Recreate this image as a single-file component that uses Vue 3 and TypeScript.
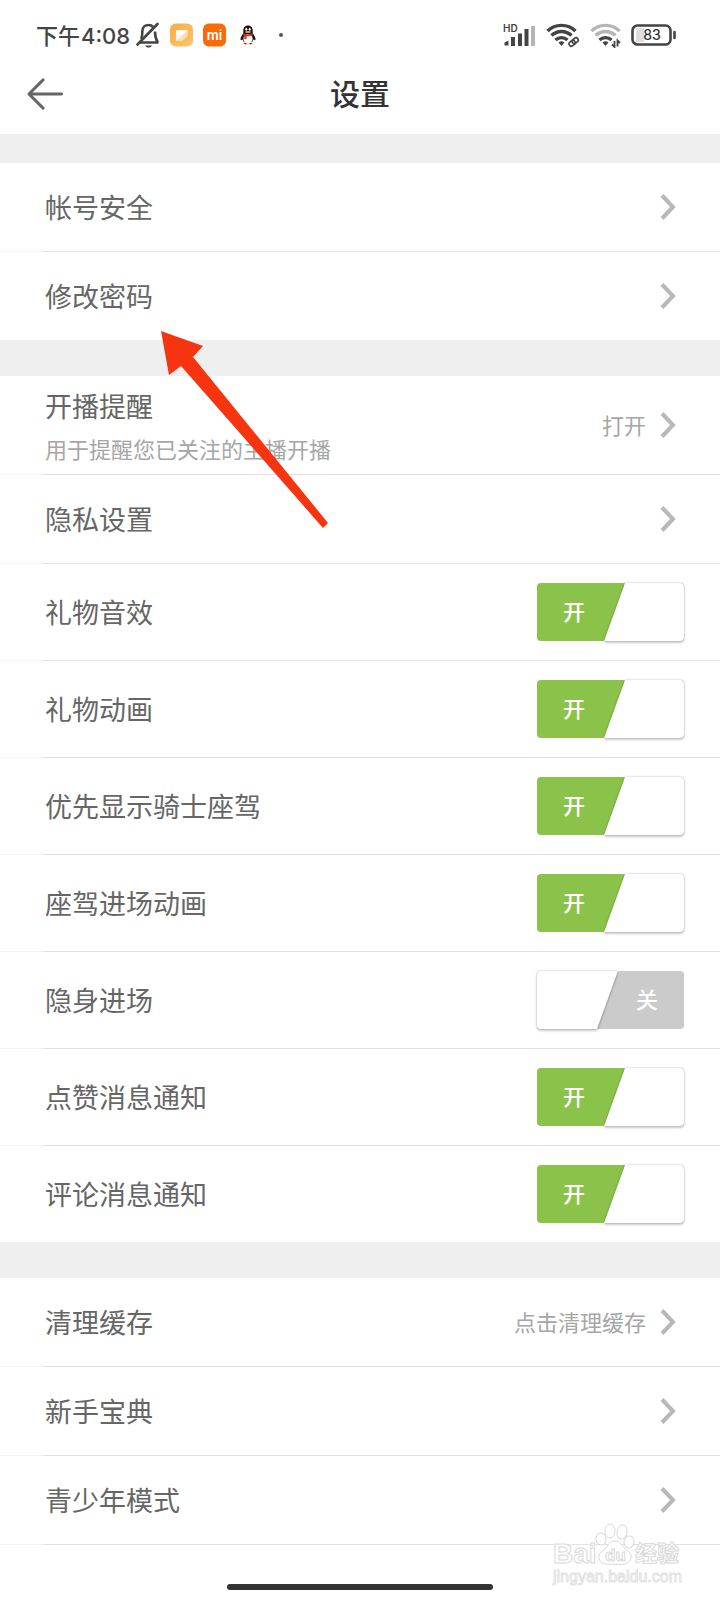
<script setup lang="ts">
import { ref } from 'vue'

interface LinkRow {
  label: string
  note?: string
  value?: string
}

interface ToggleRow {
  id: string
  label: string
  on: boolean
}

const accountRows: LinkRow[] = [{ label: '帐号安全' }, { label: '修改密码' }]

const liveRows: LinkRow[] = [
  { label: '开播提醒', note: '用于提醒您已关注的主播开播', value: '打开' },
  { label: '隐私设置' },
]

const toggles = ref<ToggleRow[]>([
  { id: 'gift-sound', label: '礼物音效', on: true },
  { id: 'gift-animation', label: '礼物动画', on: true },
  { id: 'knight-ride', label: '优先显示骑士座驾', on: true },
  { id: 'ride-entrance', label: '座驾进场动画', on: true },
  { id: 'stealth', label: '隐身进场', on: false },
  { id: 'likes', label: '点赞消息通知', on: true },
  { id: 'comments', label: '评论消息通知', on: true },
])

const otherRows: LinkRow[] = [
  { label: '清理缓存', value: '点击清理缓存' },
  { label: '新手宝典' },
  { label: '青少年模式' },
]
</script>

<template>
  <div class="page">
    <div class="status">
      <div class="status-left">
        <span class="clock">下午<span class="digits">4:08</span></span>
        <svg class="bell" width="24" height="26" viewBox="0 0 24 26" fill="none" stroke="#444" stroke-width="2.6">
          <path d="M3.5 20.5h19M5 17c1.300-2 1.300-4 1.300-7.500C6.300 5.500 9 3 12.500 3c2 0 3.500.7 4.700 2M19 9.500c0 5 .3 7 2.800 11" />
          <path d="M1.500 22.500 21.500 2" stroke-linecap="round" />
          <path d="M9 23.500h7c-1 1.500-2 2-3.500 2s-2.500-.5-3.500-2z" fill="#444" stroke="none" />
        </svg>
        <svg width="23" height="24" viewBox="0 0 24 24">
          <defs>
            <linearGradient id="note-bg" x1="0" y1="0" x2="1" y2="1">
              <stop offset="0" stop-color="#f8ad45" />
              <stop offset="1" stop-color="#fbc66c" />
            </linearGradient>
          </defs>
          <rect width="24" height="24" rx="6" fill="url(#note-bg)" />
          <path d="M6.500 7h12v6l-5.500 5H6.500z" fill="#fde0ab" />
          <path d="M6.500 7h12L6.500 18z" fill="#fff" />
        </svg>
        <svg width="23" height="24" viewBox="0 0 24 24">
          <rect width="24" height="24" rx="6" fill="#fb6a09" />
          <text x="12" y="17" text-anchor="middle" font-family="Inter, sans-serif" font-size="14" font-weight="600" fill="#fff">mi</text>
        </svg>
        <svg class="penguin" width="16" height="20" viewBox="0 0 16 20">
          <path d="M8 .5c3.200 0 4.700 2.300 4.700 5.500v2l2.300 4c.8 1.600.6 3-.2 3.200l-1.600-.7-.7 2.200H3.500l-.7-2.200-1.600.7C.4 15 .2 13.600 1 12l2.300-4V6C3.300 2.800 4.800.5 8 .5z" fill="#161616" />
          <ellipse cx="8" cy="13.700" rx="4.600" ry="4.500" fill="#fff" />
          <ellipse cx="6.300" cy="4.300" rx="1" ry="1.500" fill="#fff" />
          <ellipse cx="9.700" cy="4.300" rx="1" ry="1.500" fill="#fff" />
          <ellipse cx="8" cy="7" rx="3" ry="1" fill="#f5a21d" />
          <path d="M3.200 8.300c3 1.600 6.600 1.600 9.600 0v2c-2.300 1-4.300 1.200-6.300 1v3l-2.300-.4.2-3.300-1.200-.5z" fill="#e32a2a" />
          <path d="M3 18.300c1.500-1 3-.8 4.500.2-1.300 1.200-3.500 1.200-4.500-.2zM8.500 18.500c1.500-1 3-1.200 4.500-.2-1 1.400-3.200 1.400-4.500.2z" fill="#a85a18" />
        </svg>
        <span class="more-dot"></span>
      </div>
      <div class="status-right">
        <svg width="34" height="24" viewBox="0 0 34 24">
          <text x="1" y="9" font-family="Inter, sans-serif" font-size="10" font-weight="600" fill="#444">HD</text>
          <g stroke-width="4" stroke="#444">
            <path d="M2.500 22.500v-3l4-2v5z" fill="#444" stroke="none" />
            <path d="M11 14v9M18 10.500V23M24.500 6v17" />
            <path d="M31 3v20" stroke="#b5b5b5" />
          </g>
        </svg>
        <svg width="34" height="25" viewBox="0 0 34 25" fill="none" stroke="#444" stroke-width="3.400">
          <path d="M1.500 8C9 .500 22 .500 29.500 8" />
          <path d="M5.500 12.500c5.600-5.400 14.400-5.400 20 0" />
          <path d="M9.500 17c3.400-3.200 8.600-3.200 12 0" />
          <path d="M12.500 19.500c2-1.600 4-1.600 6 0l-3 3.500z" fill="#444" stroke="none" />
          <g stroke="#fff" stroke-width="5" transform="rotate(-40 28 19)"><path d="M24 19h9" /></g>
          <g stroke-width="1.600" transform="rotate(-40 28 19)">
            <rect x="22.500" y="16.500" width="6.500" height="4.500" rx="2.200" />
            <rect x="26.500" y="16.500" width="6.500" height="4.500" rx="2.200" />
          </g>
        </svg>
        <svg width="31" height="25" viewBox="0 0 31 25" fill="none" stroke="#444" stroke-width="3.400">
          <path d="M1.500 8C9 .500 22 .500 29.500 8" stroke="#b5b5b5" />
          <path d="M5.500 12.500c5.600-5.400 14.400-5.400 20 0" stroke="#b5b5b5" />
          <path d="M9.500 17c3.400-3.200 8.600-3.200 12 0" />
          <path d="M12.500 19.500c2-1.600 4-1.600 6 0l-3 3.500z" fill="#444" stroke="none" />
          <path d="M24.500 18v6l-2.500-2.500M27.500 23.500v-6l2.500 2.500" stroke-width="1.800" />
        </svg>
        <svg width="46" height="22" viewBox="0 0 46 22">
          <rect x="1.500" y="1.500" width="38" height="19" rx="5" fill="#fff" stroke="#444" stroke-width="2.600" />
          <path d="M5 4h8v14H5z" fill="#ddd" />
          <path d="M43.500 8v6" stroke="#444" stroke-width="2.600" stroke-linecap="round" />
          <text x="21" y="16" text-anchor="middle" font-family="Inter, sans-serif" font-size="14" font-weight="500" fill="#333">83</text>
        </svg>
      </div>
    </div>

    <header class="bar">
      <button class="back" type="button" aria-label="返回">
        <svg width="38" height="34" viewBox="0 0 38 34" fill="none" stroke="#666" stroke-width="3" stroke-linecap="round" stroke-linejoin="round">
          <path d="M35.500 17H2M16.500 2.500 2 17l14.500 14.500" />
        </svg>
      </button>
      <h1>设置</h1>
    </header>

    <main>
      <section class="group">
        <button v-for="row in accountRows" :key="row.label" class="row" type="button">
          <span class="label">{{ row.label }}</span>
          <svg class="chevron" width="16" height="28" viewBox="0 0 16 28"><path d="M2 2.500 13 14 2 25.500" /></svg>
        </button>
      </section>

      <section class="group">
        <button v-for="row in liveRows" :key="row.label" class="row" :class="{ tall: row.note }" type="button">
          <span class="texts">
            <span class="label">{{ row.label }}</span>
            <span v-if="row.note" class="note">{{ row.note }}</span>
          </span>
          <span v-if="row.value" class="value">{{ row.value }}</span>
          <svg class="chevron" width="16" height="28" viewBox="0 0 16 28"><path d="M2 2.500 13 14 2 25.500" /></svg>
        </button>
        <div v-for="row in toggles" :key="row.id" class="row toggle-row">
          <label class="label" :for="row.id">{{ row.label }}</label>
          <span class="switch" :class="{ on: row.on }">
            <input :id="row.id" v-model="row.on" type="checkbox" role="switch" />
            <span class="thumb"><span class="thumb-face"></span></span>
            <span class="state">{{ row.on ? '开' : '关' }}</span>
          </span>
        </div>
      </section>

      <section class="group last">
        <button v-for="row in otherRows" :key="row.label" class="row" type="button">
          <span class="label">{{ row.label }}</span>
          <span v-if="row.value" class="value">{{ row.value }}</span>
          <svg class="chevron" width="16" height="28" viewBox="0 0 16 28"><path d="M2 2.500 13 14 2 25.500" /></svg>
        </button>
      </section>
    </main>

    <footer class="home"><span class="home-bar"></span></footer>

    <svg class="pointer" width="168" height="198" viewBox="0 0 168 198">
      <path d="M0 0 42 15 32 26 167 192 162 197 20 35 8 44z" fill="#f63410" />
    </svg>

    <svg class="watermark" width="132" height="66" viewBox="0 0 132 66" fill="#fff" stroke="#d9d9d9" stroke-width="1">
      <text x="1" y="40" font-size="28" font-weight="700" class="latin">Bai</text>
      <ellipse cx="49" cy="16" rx="5" ry="6" transform="rotate(-10 49 16)" />
      <ellipse cx="58" cy="8" rx="5" ry="7" />
      <ellipse cx="70" cy="9" rx="5" ry="7" transform="rotate(10 70 9)" />
      <ellipse cx="77" cy="19" rx="5" ry="6" transform="rotate(10 77 19)" />
      <path d="M63 18c5 0 7 4 10 8 4 3 7 5 6 9-1 6-6 7-16 6-10 1-15 0-16-6-1-4 2-6 6-9 3-4 5-8 10-8z" />
      <text x="53" y="38" font-size="17" font-weight="700" class="latin">du</text>
      <text x="83" y="38" font-size="22" font-weight="700" class="cjk">经验</text>
      <text x="1" y="59" font-size="16" stroke="#e2e2e2" class="latin">jingyan.baidu.com</text>
    </svg>
  </div>
</template>

<style>
body {
  margin: 0;
  background: #fff;
}
</style>

<style scoped>
.page {
  position: relative;
  overflow: hidden;
  background: #fff;
  color: #666;
  font-family: 'Noto Sans CJK SC', sans-serif;
}

.status {
  display: flex;
  justify-content: space-between;
  align-items: center;
  height: 70px;
  padding: 0 43px 0 36px;
}

.status-left,
.status-right {
  display: flex;
  align-items: center;
}

.status-left {
  gap: 10px;
}

.status-right {
  gap: 10px;
}

.clock {
  color: #444;
  font-size: 22px;
  font-weight: 500;
  line-height: 30px;
}

.digits {
  padding-left: 1px;
  font-family: Inter, sans-serif;
}

.bell {
  margin-left: -4px;
}

.penguin {
  margin: 0 13px 0 4px;
}

.more-dot {
  width: 4px;
  height: 4px;
  border-radius: 50%;
  background: #555;
}

.bar {
  display: grid;
  grid-template-columns: 64px 1fr 64px;
  align-items: center;
  height: 48px;
  padding-bottom: 16px;
}

.back {
  display: flex;
  padding: 0 0 0 27px;
  border: 0;
  background: none;
}

h1 {
  margin: 0;
  padding-bottom: 4px;
  color: #333;
  font-size: 30px;
  font-weight: 500;
  line-height: 40px;
  text-align: center;
}

main {
  padding-top: 29px;
  background: #efefef;
}

.group {
  display: flex;
  flex-direction: column;
  background: #fff;
}

.group + .group {
  margin-top: 36px;
}

.row {
  display: flex;
  align-items: center;
  min-height: 88px;
  box-sizing: content-box;
  padding: 0 44px 0 45px;
  border: 0 solid;
  border-image: linear-gradient(to right, #f6f6f6 44px, #e2e2e2 44px) 1;
  background: none;
  color: inherit;
  font: inherit;
  text-align: left;
}

.row + .row {
  border-top-width: 1px;
}

.group.last .row:last-child {
  border-bottom-width: 1px;
}

.tall {
  min-height: 98px;
}

.toggle-row {
  min-height: 96px;
  padding-right: 36px;
}

.texts {
  display: flex;
  flex: 1;
  flex-direction: column;
  gap: 4px;
}

.tall .texts {
  padding-top: 4px;
}

.label {
  flex: 1;
  font-size: 27px;
  line-height: 38px;
}

.note,
.value {
  color: #a6a6a6;
  font-size: 22px;
  line-height: 38px;
}

.value {
  margin-right: 14px;
  padding-bottom: 2px;
}

.chevron {
  fill: none;
  stroke: #b8b8b8;
  stroke-width: 4;
}

.switch {
  position: relative;
  display: flex;
  width: 147px;
  height: 58px;
  border-radius: 4px;
  background: #cbcbcb;
}

.switch.on {
  background: #8bc34a;
}

.switch input {
  position: absolute;
  inset: 0;
  z-index: 1;
  width: 100%;
  height: 100%;
  margin: 0;
  opacity: 0;
}

.thumb {
  position: absolute;
  inset: 0;
  filter: drop-shadow(0 2px 1px rgba(0, 0, 0, 0.16)) drop-shadow(0 0 1px rgba(0, 0, 0, 0.26));
}

.thumb-face {
  display: block;
  height: 100%;
  border-radius: 4px;
  background: #fff;
  clip-path: polygon(0 0, 81px 0, 60px 100%, 0 100%);
}

.on .thumb-face {
  clip-path: polygon(88px 0, 100% 0, 100% 100%, 67px 100%);
}

.state {
  position: relative;
  width: 74px;
  margin-left: auto;
  color: #fff;
  font-size: 22px;
  font-weight: 500;
  line-height: 55px;
  text-align: center;
}

.on .state {
  margin: 0;
}

.home {
  display: flex;
  justify-content: center;
  align-items: center;
  height: 56px;
  padding-top: 28px;
  box-sizing: border-box;
}

.home-bar {
  width: 37%;
  height: 6px;
  border-radius: 3px;
  background: #333;
}

.pointer {
  position: absolute;
  top: 331px;
  left: 161px;
  pointer-events: none;
}

.watermark {
  position: absolute;
  right: 36px;
  bottom: 12px;
  pointer-events: none;
}

.latin {
  font-family: 'Liberation Sans', sans-serif;
}

.cjk {
  font-family: 'Noto Sans CJK SC', sans-serif;
}
</style>
